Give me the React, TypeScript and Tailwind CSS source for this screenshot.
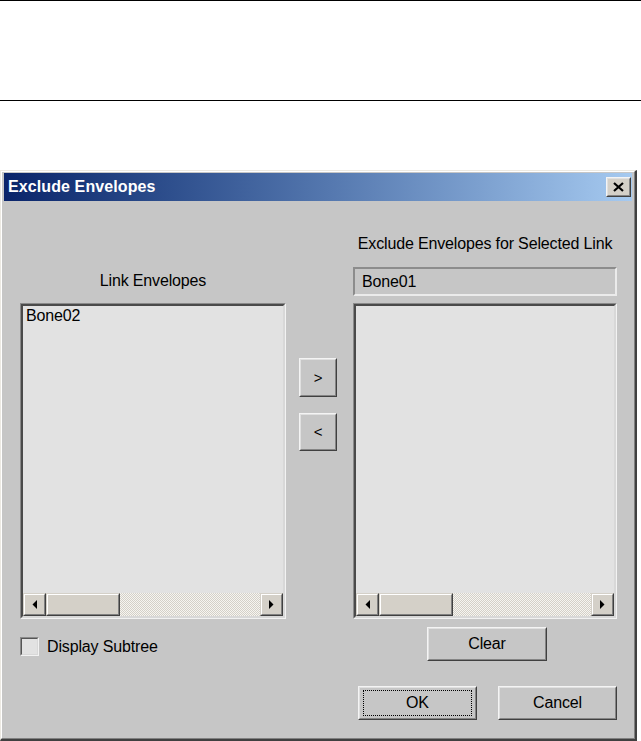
import React from 'react';

const face = 'bg-[#c6c6c6]';

function Raised({ className = '', children }: { className?: string; children?: React.ReactNode }) {
  return (
    <div className={`border border-t-[#f4f4f4] border-l-[#f4f4f4] border-r-[#404040] border-b-[#404040] ${className}`}>
      <div className="flex h-full w-full items-center justify-center border border-t-[#e0e0e0] border-l-[#e0e0e0] border-r-[#858585] border-b-[#858585]">
        {children}
      </div>
    </div>
  );
}

function ScrollArrow({ dir }: { dir: 'left' | 'right' }) {
  return (
    <div className="h-full w-[23px] shrink-0 border border-t-[#d4d0c8] border-l-[#d4d0c8] border-r-[#404040] border-b-[#404040] bg-[#d4d0c8]">
      <div className="flex h-full w-full items-center justify-center border border-t-white border-l-white border-r-[#808080] border-b-[#808080]">
        <svg width="5" height="9" viewBox="0 0 5 9" aria-hidden>
          {dir === 'left' ? (
            <polygon points="5,0 5,9 0.5,4.5" fill="#000" />
          ) : (
            <polygon points="0,0 0,9 4.5,4.5" fill="#000" />
          )}
        </svg>
      </div>
    </div>
  );
}

function ScrollBar() {
  return (
    <div className="flex h-[23px] shrink-0">
      <ScrollArrow dir="left" />
      <div className="h-full w-[74px] shrink-0 border border-t-[#d4d0c8] border-l-[#d4d0c8] border-r-[#404040] border-b-[#404040] bg-[#d4d0c8]">
        <div className="h-full w-full border border-t-white border-l-white border-r-[#808080] border-b-[#808080]" />
      </div>
      <div className="h-full flex-1 bg-[repeating-conic-gradient(#d4d0c8_0_25%,#f6f5f1_0_50%)] bg-[length:2px_2px]" />
      <ScrollArrow dir="right" />
    </div>
  );
}

function ListBox({ item, className = '' }: { item: string; className?: string }) {
  return (
    <div className={`h-[316px] border border-t-[#8a8a8a] border-l-[#8a8a8a] border-r-[#f2f2f2] border-b-[#f2f2f2] ${className}`}>
      <div className="flex h-full flex-col border-2 border-t-[#4a4a4a] border-l-[#4a4a4a] border-r-[#d8d8d8] border-b-[#d8d8d8] bg-[#e2e2e2]">
        <div className="flex-1 pl-[3px] pt-px text-[16px] leading-[18px] text-black">{item}</div>
        <ScrollBar />
      </div>
    </div>
  );
}

export default function App() {
  return (
    <div className="h-[741px] w-[641px] overflow-hidden bg-white font-['Liberation_Sans',Arial,sans-serif]">
      <div className="h-[101px] w-full border-t border-b border-black" />

      <div className="mt-[69px] h-[571px] w-[637px] border border-t-[#ece9e2] border-l-[#ece9e2] border-r-2 border-b-2 border-r-[#404040] border-b-[#404040]">
        <div className={`h-full w-full border border-t-white border-l-white border-r-[#808080] border-b-[#808080] ${face} px-[2px] pt-px`}>
          {/* title bar */}
          <div className="flex h-[28px] items-center justify-between bg-linear-to-r from-[#0a246a] to-[#a6caf0] pl-1 pr-px">
            <span className="text-[16px] leading-[18px] font-bold tracking-[0.1px] text-white">Exclude Envelopes</span>
            <Raised className="h-[20px] w-[25px] bg-[#d4d0c8]">
              <svg width="11" height="10" viewBox="0 0 11 10" aria-hidden>
                <path d="M1 1 L10 9 M10 1 L1 9" stroke="#000" strokeWidth="2.2" />
              </svg>
            </Raised>
          </div>

          {/* body */}
          <div className="flex pl-[16px] text-[16px] leading-[18px] tracking-[-0.15px] text-black">
            <div className="flex w-[266px] flex-col">
              <div className="mt-[71px] h-[18px] text-center">Link Envelopes</div>
              <ListBox item="Bone02" className="mt-[13px]" />
              <div className="mt-[18px] flex h-[19px] items-center gap-[8px]">
                <div className="h-[19px] w-[19px] border border-t-[#8a8a8a] border-l-[#8a8a8a] border-r-[#f2f2f2] border-b-[#f2f2f2]">
                  <div className="h-full w-full border border-t-[#555] border-l-[#555] border-r-[#d8d8d8] border-b-[#d8d8d8] bg-[#e2e2e2]" />
                </div>
                <span>Display Subtree</span>
              </div>
            </div>

            <div className="flex w-[67px] flex-col pl-[13px]">
              <Raised className="mt-[157px] h-[39px] w-[38px]">
                <span className="text-[15px]">&gt;</span>
              </Raised>
              <Raised className="mt-[16px] h-[38px] w-[38px]">
                <span className="text-[15px]">&lt;</span>
              </Raised>
            </div>

            <div className="flex w-[264px] flex-col">
              <div className="mt-[34px] h-[18px] whitespace-nowrap text-center">
                Exclude Envelopes for Selected Link
              </div>
              <div className="mt-[14px] flex h-[29px] items-center border-2 border-t-[#8c8c8c] border-l-[#8c8c8c] border-r-[#ebebeb] border-b-[#ebebeb] pl-[7px]">
                Bone01
              </div>
              <ListBox item="" className="mt-[7px]" />
              <Raised className="mt-[8px] ml-[74px] h-[34px] w-[120px]">Clear</Raised>
              <div className="mt-[25px] flex gap-[21px] pl-[5px]">
                <Raised className="h-[34px] w-[119px]">
                  <div className="m-[3px] flex h-[26px] w-full items-center justify-center border border-dotted border-black">
                    OK
                  </div>
                </Raised>
                <Raised className="h-[34px] w-[119px]">Cancel</Raised>
              </div>
            </div>
          </div>
        </div>
      </div>
    </div>
  );
}
